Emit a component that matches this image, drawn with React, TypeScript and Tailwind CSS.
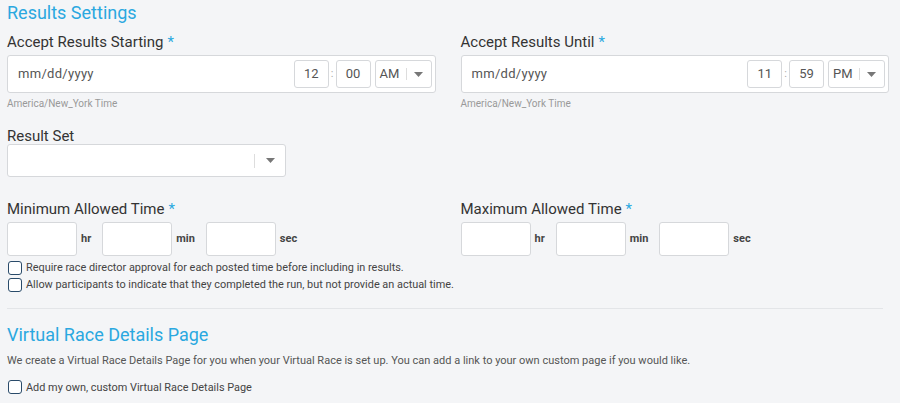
import React from "react";

const blue = "text-[#2aa8e0]";

function Caret() {
  return (
    <svg width="9" height="5" viewBox="0 0 9 5" className="fill-[#777]">
      <path d="M0 0h9L4.5 5z" />
    </svg>
  );
}

function Label({ text, required }: { text: string; required?: boolean }) {
  return (
    <div className="text-[15px] leading-[18px] text-[#333]">
      {text}
      {required && <span className={`ml-1 ${blue}`}>*</span>}
    </div>
  );
}

function DateTime({ label, hour, min, ampm }: { label: string; hour: string; min: string; ampm: string }) {
  return (
    <div className="flex-1">
      <div className="mt-[9px]">
        <Label text={label} required />
      </div>
      <div className="mt-[4px] flex h-[38px] items-center rounded-[3px] border border-[#d6d8db] bg-white pl-[10px] pr-[3px]">
        <span className="flex-1 text-[13px] tracking-[0.3px] text-[#555]">mm/dd/yyyy</span>
        <div className="flex h-[28px] w-[35px] items-center justify-center rounded-[3px] border border-[#d6d8db] text-[13px] text-[#555]">
          {hour}
        </div>
        <span className="mx-[2px] text-[11px] text-[#aaa]">:</span>
        <div className="flex h-[28px] w-[35px] items-center justify-center rounded-[3px] border border-[#d6d8db] text-[13px] text-[#555]">
          {min}
        </div>
        <div className="ml-[4px] flex h-[28px] w-[57px] items-center rounded-[3px] border border-[#d6d8db] pl-[4px] text-[13px] text-[#555]">
          <span className="w-[26px]">{ampm}</span>
          <span className="h-[12px] w-px bg-[#ddd]" />
          <span className="ml-[7px] flex">
            <Caret />
          </span>
        </div>
      </div>
      <div className="mt-[3px] text-[10px] text-[#999]">America/New_York Time</div>
    </div>
  );
}

function Duration({ label }: { label: string }) {
  const units = ["hr", "min", "sec"];
  return (
    <div className="flex-1">
      <Label text={label} required />
      <div className="mt-[4px] flex items-center">
        {units.map((u) => (
          <div key={u} className="flex items-center">
            <div className="h-[34px] w-[70px] rounded-[3px] border border-[#d6d8db] bg-white" />
            <span className="ml-[4px] mr-[11px] text-[11px] font-bold text-[#444]">{u}</span>
          </div>
        ))}
      </div>
    </div>
  );
}

function Check({ text }: { text: string }) {
  return (
    <label className="flex items-center gap-[4px] text-[10.9px] leading-[17px] text-[#444]">
      <span className="h-[14px] w-[14px] rounded-[3px] border border-[#2a4b6a] bg-white" />
      {text}
    </label>
  );
}

export default function App() {
  return (
    <div className="min-h-[403px] bg-[#f4f5f7] px-[7px] pt-[2px] font-['Roboto',sans-serif]">
      <h2 className={`text-[18px] leading-[22px] ${blue}`}>Results Settings</h2>

      <div className="flex gap-[25px] pr-[4px]">
        <DateTime label="Accept Results Starting" hour="12" min="00" ampm="AM" />
        <DateTime label="Accept Results Until" hour="11" min="59" ampm="PM" />
      </div>

      <div className="mt-[16px]">
        <Label text="Result Set" />
        <div className="-mt-px flex h-[33px] w-[279px] items-center justify-end rounded-[3px] border border-[#d6d8db] bg-white pr-[10px]">
          <span className="mr-[11px] h-[14px] w-px bg-[#ddd]" />
          <Caret />
        </div>
      </div>

      <div className="mt-[23px] flex gap-[25px] pr-[4px]">
        <Duration label="Minimum Allowed Time" />
        <Duration label="Maximum Allowed Time" />
      </div>

      <div className="mt-[3px] pl-px">
        <Check text="Require race director approval for each posted time before including in results." />
        <Check text="Allow participants to indicate that they completed the run, but not provide an actual time." />
      </div>

      <div className="mt-[15px] mr-[10px] border-t border-[#e3e5e8]" />

      <h2 className={`mt-[15px] text-[18px] leading-[22px] ${blue}`}>Virtual Race Details Page</h2>
      <p className="mt-[7px] text-[11px] text-[#555]">
        We create a Virtual Race Details Page for you when your Virtual Race is set up. You can add a link to your own custom page if you would like.
      </p>
      <div className="mt-[9px] pl-px">
        <Check text="Add my own, custom Virtual Race Details Page" />
      </div>
    </div>
  );
}
